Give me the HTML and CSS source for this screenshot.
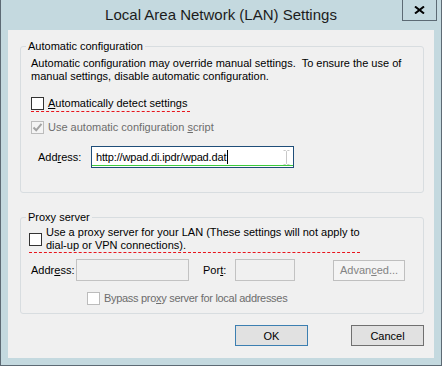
FILE: index.html
```html
<!DOCTYPE html>
<html lang="en">
    <head>
        <meta charset="UTF-8">
        <title>Local Area Network (LAN) Settings</title>
        <link rel="stylesheet" href="styles.css">
    </head>
    <body>
        <div class="window">
            <div class="titlebar">
                <span></span>
                <div class="title">Local Area Network (LAN) Settings</div>
                <button class="close-btn" aria-label="Close">
                    <svg width="11" height="8" viewBox="0 0 11 8">
                        <path d="M1 0.5 L10 7.5 M10 0.5 L1 7.5" stroke="#000" stroke-width="2" fill="none"/>
                    </svg>
                </button>
            </div>

            <div class="client">
                <fieldset class="group group-auto">
                    <legend>Automatic configuration</legend>
                    <p class="desc">Automatic configuration may override manual settings.&nbsp; To ensure the use of<br>manual settings, disable automatic configuration.</p>

                    <label class="check focus check-detect">
                        <span class="box"></span>
                        <span class="text"><u>A</u>utomatically detect settings</span>
                    </label>

                    <label class="check disabled check-script">
                        <span class="box checked">
                            <svg width="11" height="11" viewBox="0 0 11 11">
                                <path d="M1.5 5.5 L4.2 8.3 L9.5 1.8" stroke="#a3a3a3" stroke-width="2" fill="none"/>
                            </svg>
                        </span>
                        <span class="text">Use automatic configuration <u>s</u>cript</span>
                    </label>

                    <div class="field-row script-row">
                        <span class="field-label">Add<u>r</u>ess:</span>
                        <div class="input active">
                            <span class="value">http://wpad.di.ipdr/wpad.dat</span><span class="caret"></span>
                            <!-- mouse pointer sitting over the box -->
                            <svg class="ibeam" width="7" height="15" viewBox="0 0 7 15">
                                <path d="M0.5 0.5 H2.5 L3.5 1.5 L4.5 0.5 H6.5 M3.5 1.5 V13.5 M0.5 14.5 H2.5 L3.5 13.5 L4.5 14.5 H6.5" stroke="#c8c8c8" fill="none"/>
                            </svg>
                        </div>
                    </div>
                </fieldset>

                <fieldset class="group group-proxy">
                    <legend>Proxy server</legend>

                    <label class="check focus check-proxy">
                        <span class="box"></span>
                        <span class="text">Use a proxy server for your LAN (These settings will not apply to<br>dial-up or VPN connections).</span>
                    </label>

                    <div class="field-row proxy-row">
                        <span class="field-label disabled">Addr<u>e</u>ss:</span>
                        <div class="input off input-address"></div>
                        <span class="field-label disabled port-label">Por<u>t</u>:</span>
                        <div class="input off input-port"></div>
                        <button class="btn btn-disabled">Advan<u>c</u>ed...</button>
                    </div>

                    <label class="check disabled check-bypass">
                        <span class="box"></span>
                        <span class="text">Bypass pro<u>x</u>y server for local addresses</span>
                    </label>
                </fieldset>

                <div class="actions">
                    <button class="btn btn-default">OK</button>
                    <button class="btn">Cancel</button>
                </div>
            </div>
        </div>
    </body>
</html>
```

FILE: styles.css
```css
body {
    margin: 0;
    font-family: 'Liberation Sans', Arial, sans-serif;
    font-size: 11px;
    color: #000;
}
.window {
    width: 440px;
    height: 365px;
    background: #c4d9df;
    border: 1px solid #5d6a74;
    border-top: none;
}
.titlebar {
    display: grid;
    grid-template-columns: 1fr auto 1fr;
    height: 30px;
}
.title {
    font-size: 15px;
    line-height: 30px;
    color: #1c1c1c;
    white-space: nowrap;
}
.close-btn {
    justify-self: end;
    align-self: start;
    width: 35px;
    height: 21px;
    margin-right: 4px;
    padding: 0;
    background: #c4d9df;
    border: 1px solid #5d6a74;
    border-top: none;
    display: flex;
    align-items: center;
    justify-content: center;
}
.client {
    height: 328px;
    margin: 0 7px;
    padding: 9px 10px 0 12px;
    box-sizing: border-box;
    background: #f0f0f0;
}
/* Group boxes */
.group {
    margin: 0;
    padding: 0 0 0 10px;
    border: 1px solid #d8dde0;
    border-radius: 3px;
}
.group legend {
    margin-left: -5px;
    padding: 0 2px;
    line-height: 14px;
}
.group-auto {
    padding-bottom: 24px;
}
.group-proxy {
    margin-top: 17px;
    padding-left: 8px;
    padding-bottom: 8px;
}
.group-proxy legend {
    margin-left: -3px;
}
.desc {
    margin: 4px 0 0;
    line-height: 13px;
}
/* Checkboxes */
.check {
    display: flex;
    align-items: center;
    line-height: 13px;
}
.check .box {
    width: 11px;
    height: 11px;
    border: 1px solid #333;
    background: #fff;
    margin-right: 4px;
    flex-shrink: 0;
    display: flex;
    align-items: center;
    justify-content: center;
}
.check.disabled {
    color: #6d6d6d;
}
.check.disabled .box {
    border-color: #bcbcbc;
}
.check .box.checked {
    background: #f4f4f4;
}
.check.focus {
    width: fit-content;
    padding-bottom: 1px;
    border-bottom: 1px dashed #e8141c;
}
.check-detect {
    margin-top: 14px;
    padding-right: 3px;
}
.check-script {
    margin-top: 9px;
}
.check-proxy {
    width: 351px;
    height: 24px;
    margin-top: 3px;
    margin-left: 0;
}
.check-bypass {
    margin-top: 11px;
    margin-left: 58px;
    letter-spacing: -0.3px;
}
/* Text fields */
.field-row {
    display: flex;
    align-items: center;
}
.script-row {
    margin-top: 12px;
}
.proxy-row {
    margin-top: 6px;
}
.field-label {
    white-space: nowrap;
}
.script-row .field-label {
    width: 53px;
    margin-left: 7px;
}
.proxy-row .field-label {
    margin-left: 2px;
    width: 45px;
}
.proxy-row .port-label {
    margin-left: 14px;
    width: 32px;
}
.input {
    height: 22px;
    box-sizing: border-box;
    border: 1px solid #abadb3;
    background: #fff;
    padding: 0 4px;
    line-height: 20px;
    position: relative;
}
.input.active {
    width: 203px;
    border-color: #1f4e79;
    box-shadow: inset 0 -1px 0 #fff, inset 0 -2px 0 #3bcc3b;
}
.input .value {
    letter-spacing: -0.15px;
}
.input.off {
    background: #f0f0f0;
    border-color: #c2c2c2;
}
.input-address {
    width: 113px;
}
.input-port {
    width: 60px;
}
.caret {
    display: inline-block;
    width: 1px;
    height: 14px;
    margin-left: 1px;
    background: #000;
    vertical-align: -3px;
}
.ibeam {
    position: absolute;
    right: 3px;
    top: 3px;
}
/* Buttons */
.btn {
    width: 73px;
    height: 21px;
    padding: 0;
    font-family: inherit;
    font-size: 11px;
    color: #000;
    background: #e1e1e1;
    border: 1px solid #707070;
}
.btn-default {
    border-color: #3c7fb1;
}
.btn-disabled {
    width: 72px;
    margin-left: 38px;
    color: #838383;
    background: #f4f4f4;
    border-color: #bfbfbf;
}
.actions {
    display: flex;
    justify-content: flex-end;
    gap: 43px;
    margin-top: 11px;
}
u {
    text-decoration-thickness: 1px;
    text-underline-offset: 1px;
}
```
